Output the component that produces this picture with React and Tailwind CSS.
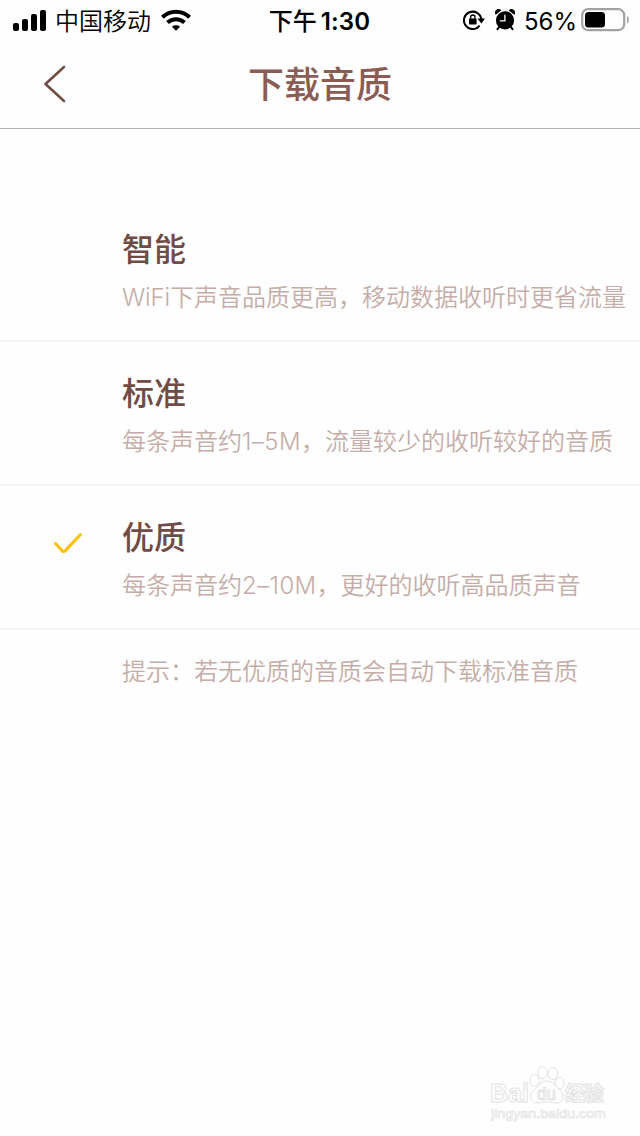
const qualities = [
  { id: 'smart', title: '智能', latin: 'WiFi', desc: '下声音品质更高，移动数据收听时更省流量' },
  { id: 'standard', title: '标准', prefix: '每条声音约', latin: '1–5M', desc: '，流量较少的收听较好的音质' },
  { id: 'high', title: '优质', prefix: '每条声音约', latin: '2–10M', desc: '，更好的收听高品质声音' },
];

export default function App() {
  const selected = 'high';

  return (
    <div className="flex flex-col w-[640px] h-[1136px] overflow-hidden bg-[#fefefe] font-['Inter','Noto_Sans_CJK_SC',sans-serif]">
      <StatusBar />

      {/* Nav bar */}
      <header className="grid grid-cols-[80px_1fr_80px] items-center h-[89px] border-b border-[#b2b2b2]">
        <svg className="ml-[42px]" width="26" height="40" viewBox="0 0 26 40" fill="none" stroke="#714c46" strokeWidth="2.6" strokeLinecap="round" strokeLinejoin="round">
          <path d="M22 3 L3.5 20 L22 37" />
        </svg>
        <h1 className="pt-0.5 text-center text-[36px] leading-[52px] font-medium text-[#8a5c54]">下载音质</h1>
      </header>

      {/* Quality options */}
      <ul className="mt-[69px]">
        {qualities.map((q) => (
          <li key={q.id} className="flex h-36 border-b-2 border-[#f4f4f4]">
            <div className="w-[122px] shrink-0 pl-[53px] pt-[46px]">{q.id === selected && <Check />}</div>
            <div className="pt-7 whitespace-nowrap">
              <h2 className="mb-1.5 text-[32px] leading-[48px] font-medium text-[#714c46]">{q.title}</h2>
              <Desc>
                {q.prefix}
                <span className={q.prefix ? 'tracking-[0.4px]' : 'tracking-[-0.15px]'}>{q.latin}</span>
                {q.desc}
              </Desc>
            </div>
          </li>
        ))}
      </ul>
      <div className="pl-[122px] pt-6">
        <Desc>提示：若无优质的音质会自动下载标准音质</Desc>
      </div>

      <Watermark />
    </div>
  );
}

function StatusBar() {
  return (
    <div className="grid grid-cols-[1fr_auto_1fr] items-center h-10 shrink-0 pl-[13px] pr-[10px] text-2xl leading-10 text-black whitespace-nowrap">
      <div className="flex items-center">
        <svg width="33" height="22" viewBox="0 0 33 22">
          <rect x="0" y="13" width="6" height="8" rx="2" />
          <rect x="9" y="9" width="6" height="12" rx="2" />
          <rect x="18" y="4" width="6" height="17" rx="2" />
          <rect x="27" y="0" width="6" height="21" rx="2" />
        </svg>
        <span className="ml-[9px] pt-0.5 font-[350]">中国移动</span>
        <svg className="ml-[10px] mb-0.5" width="30" height="22" viewBox="0 0 30 22" fill="none" stroke="#000" strokeWidth="4">
          <path d="M1.4 8.2 C9 .9 21 .9 28.6 8.2" />
          <path d="M6.5 13.5 C11.4 9 18.6 9 23.5 13.5" />
          <path d="M11 17.7 C13.3 15.8 16.7 15.8 19 17.7 L15 21.8 Z" fill="#000" stroke="none" />
        </svg>
      </div>
      <div className="mr-1 pt-0.5 font-semibold"><span className="font-medium">下午</span><span className="ml-1 tracking-[0.2px]">1:30</span></div>
      <div className="flex items-center justify-end">
        <RotationLock />
        <Alarm />
        <span className="ml-[10px] pt-0.5">56%</span>
        <svg className="ml-1 mb-0.5" width="49" height="24" viewBox="0 0 49 24">
          <rect x="1.2" y="1.2" width="42" height="21" rx="6" fill="none" stroke="#a2a2a2" strokeWidth="2.2" />
          <rect x="4" y="4" width="20" height="15.5" rx="3.5" />
          <path d="M46 8 C48.4 9 48.4 14.5 46 15.5 Z" fill="#a2a2a2" />
        </svg>
      </div>
    </div>
  );
}

function RotationLock() {
  return (
    <svg className="mb-0.5 -mr-px" width="22" height="20" viewBox="0 0 22 20" fill="none" stroke="#000" strokeWidth="2">
      <path d="M16.6 15.6 A8.7 8.7 0 1 1 18.3 9.5" />
      <path d="M14.4 8.5 H22 L18.4 13.4 Z" fill="#000" stroke="none" />
      <rect x="6" y="8.6" width="7.6" height="6" rx="0.8" fill="#000" stroke="none" />
      <path d="M7.6 9 V7.2 A2.2 2.2 0 0 1 12 7.2 V9" strokeWidth="1.3" />
    </svg>
  );
}

function Alarm() {
  return (
    <svg className="ml-[11px] -mr-px mb-0.5" width="20" height="22" viewBox="0 0 20 22">
      <circle cx="10" cy="11.4" r="9.1" />
      <path d="M0.8 5.8 A3.4 3.4 0 0 1 6.2 1.4 Z M13.8 1.4 A3.4 3.4 0 0 1 19.2 5.8 Z" />
      <path d="M4.5 17.5 L2.5 20.2 M15.5 17.5 L17.5 20.2" stroke="#000" strokeWidth="2" strokeLinecap="round" />
      <path d="M9.9 5.8 V11.9 H4.8" fill="none" stroke="#fff" strokeWidth="1.3" />
    </svg>
  );
}

function Check() {
  return (
    <svg width="30" height="22" viewBox="0 0 30 22" fill="none" stroke="#fdbf00" strokeWidth="3" strokeLinecap="round" strokeLinejoin="round">
      <path d="M2.5 11.5 L9 18.6 Q10.6 20.2 12.3 18.6 L27.5 2.5" />
    </svg>
  );
}

function Watermark() {
  return (
    <svg className="mt-auto mb-[12px] ml-[489px] shrink-0" width="120" height="60" viewBox="0 0 120 60" fill="#fefefe" stroke="#e2e2e2" strokeWidth="1">
      <text x="1" y="38" fontFamily="Liberation Sans" fontWeight="700" fontSize="26" textLength="39" lengthAdjust="spacingAndGlyphs">Bai</text>
      <ellipse cx="45.5" cy="16.5" rx="4.8" ry="6" />
      <ellipse cx="53.5" cy="8.8" rx="4.8" ry="6" />
      <ellipse cx="64" cy="9.5" rx="4.8" ry="6" />
      <ellipse cx="70.5" cy="19" rx="4.6" ry="5.8" />
      <path d="M58 17 C51 17 50 23 45 26 C39 30 41 39 48 39 C52 39 54 38 58 38 C62 38 64 39 68 39 C75 39 76 30 71 26 C66 23 65 17 58 17 Z" />
      <text x="48" y="36" fontFamily="Liberation Sans" fontWeight="400" fontSize="18" textLength="19" lengthAdjust="spacingAndGlyphs">du</text>
      <text x="76" y="37" fontFamily="Noto Sans CJK SC" fontWeight="700" fontSize="20" textLength="39">经验</text>
      <text x="2" y="54" fontFamily="Liberation Sans" fontWeight="400" fontSize="12" strokeWidth="0.6" textLength="115" lengthAdjust="spacingAndGlyphs">jingyan.baidu.com</text>
    </svg>
  );
}

function Desc({ children }) { return <p className="text-2xl leading-9 font-[350] whitespace-nowrap text-[#c5ada7]">{children}</p>; }
